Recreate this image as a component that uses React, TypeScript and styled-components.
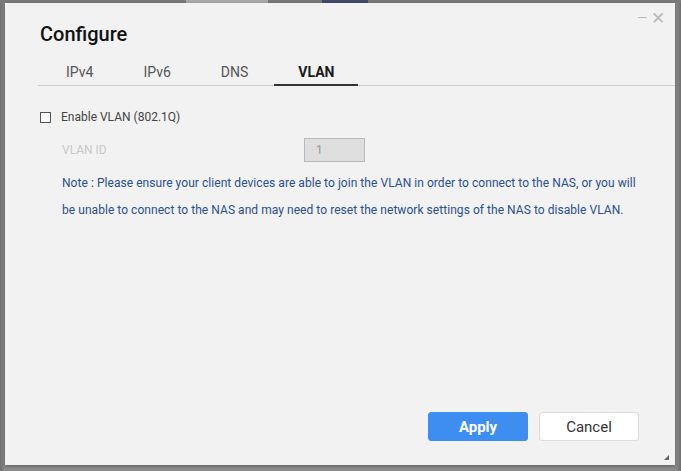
import React from "react";
import styled, { createGlobalStyle } from "styled-components";

const Global = createGlobalStyle`
  html, body { margin: 0; padding: 0; }
  body { font-family: Roboto, "Liberation Sans", sans-serif; background: #878787; }
  * { box-sizing: border-box; }
`;

const Page = styled.div`
  width: 681px;
  height: 471px;
  display: flex;
  flex-direction: column;
  background: linear-gradient(to right, #6f6f6f 0px, #8a8a8a 5px, #8a8a8a 676px, #6f6f6f 681px);
  overflow: hidden;
`;

const BehindStrip = styled.div`
  height: 3px;
  flex: none;
  display: flex;
  background: #7a7a7a;
  padding-left: 186px;
  gap: 54px;
`;

const BehindText = styled.div<{ $w: number; $c: string }>`
  width: ${(p) => p.$w}px;
  height: 3px;
  background: ${(p) => p.$c};
  opacity: 0.6;
`;

const Dialog = styled.div`
  position: relative;
  margin: 0 6px 6px 5px;
  flex: 1;
  background: #f2f2f2;
  display: flex;
  flex-direction: column;
  box-shadow: 0 1px 3px rgba(0, 0, 0, 0.35);
`;

const WindowControls = styled.div`
  position: absolute;
  top: 5px;
  right: 10px;
  display: flex;
  align-items: center;
  gap: 3px;
  color: #b9b9b9;
  font-size: 17px;
  font-weight: 300;
`;

const Title = styled.h1`
  margin: 18px 0 0 35px;
  font-size: 20px;
  font-weight: 500;
  color: #111;
  line-height: 26px;
`;

const TabBar = styled.div`
  margin: 17px 0 0 33px;
  display: flex;
  gap: 2px;
  padding-left: 4px;
  border-bottom: 1px solid #cfcfcf;
`;

const Tab = styled.div<{ $active?: boolean }>`
  padding: 0 24px;
  height: 22px;
  line-height: 17px;
  font-size: 14px;
  color: ${(p) => (p.$active ? "#1a1a1a" : "#555")};
  font-weight: ${(p) => (p.$active ? 700 : 400)};
  border-bottom: 2px solid ${(p) => (p.$active ? "#333" : "transparent")};
  margin-bottom: -1px;
  text-align: center;
  min-width: 75px;
`;

const Content = styled.div`
  flex: 1;
  padding: 22px 0 0 35px;
  display: flex;
  flex-direction: column;
`;

const CheckRow = styled.label`
  display: flex;
  align-items: center;
  gap: 10px;
  font-size: 12px;
  color: #444;
  height: 18px;
`;

const Box = styled.span`
  width: 11px;
  height: 11px;
  border: 1px solid #555;
  background: #fff;
  display: inline-block;
`;

const FieldRow = styled.div`
  display: flex;
  align-items: center;
  margin: 12px 0 0 22px;
`;

const FieldLabel = styled.div`
  width: 242px;
  font-size: 12px;
  color: #c8c8c8;
`;

const Input = styled.div`
  width: 61px;
  height: 24px;
  border: 1px solid #b8b8b8;
  background: #dedede;
  color: #9a9a9a;
  font-size: 12px;
  padding-left: 11px;
  line-height: 22px;
`;

const Note = styled.p`
  margin: 8px 0 0 22px;
  font-size: 12px;
  line-height: 27px;
  color: #2a4f93;
  width: 578px;
  letter-spacing: 0.05px;
`;

const Footer = styled.div`
  display: flex;
  justify-content: flex-end;
  gap: 11px;
  padding: 0 36px 24px 0;
`;

const Button = styled.button<{ $primary?: boolean }>`
  width: 100px;
  height: 29px;
  border-radius: 3px;
  font-family: Roboto, "Liberation Sans", sans-serif;
  font-size: 15px;
  font-weight: ${(p) => (p.$primary ? 700 : 400)};
  color: ${(p) => (p.$primary ? "#fff" : "#333")};
  background: ${(p) => (p.$primary ? "#3d8ef0" : "#fff")};
  border: 1px solid ${(p) => (p.$primary ? "#3d8ef0" : "#dcdcdc")};
  padding: 0;
`;

const Grip = styled.svg`
  position: absolute;
  right: 6px;
  bottom: 5px;
`;

export default function App() {
  return (
    <>
      <Global />
      <Page>
        <BehindStrip>
          <BehindText $w={82} $c="#c9c9c9" />
          <BehindText $w={46} $c="#1f2c5c" />
        </BehindStrip>
        <Dialog>
          <WindowControls>
            <span>–</span>
            <span>✕</span>
          </WindowControls>
          <Title>Configure</Title>
          <TabBar>
            <Tab>IPv4</Tab>
            <Tab>IPv6</Tab>
            <Tab>DNS</Tab>
            <Tab $active>VLAN</Tab>
          </TabBar>
          <Content>
            <CheckRow>
              <Box />
              Enable VLAN (802.1Q)
            </CheckRow>
            <FieldRow>
              <FieldLabel>VLAN ID</FieldLabel>
              <Input>1</Input>
            </FieldRow>
            <Note>
              Note : Please ensure your client devices are able to join the VLAN in order to connect to the NAS, or you will be unable to connect to the NAS and may need to reset the network settings of the NAS to disable VLAN.
            </Note>
          </Content>
          <Footer>
            <Button $primary>Apply</Button>
            <Button>Cancel</Button>
          </Footer>
          <Grip width="5" height="5" viewBox="0 0 5 5">
            <path d="M5 0 L5 5 L0 5 Z" fill="#666" />
          </Grip>
        </Dialog>
      </Page>
    </>
  );
}
